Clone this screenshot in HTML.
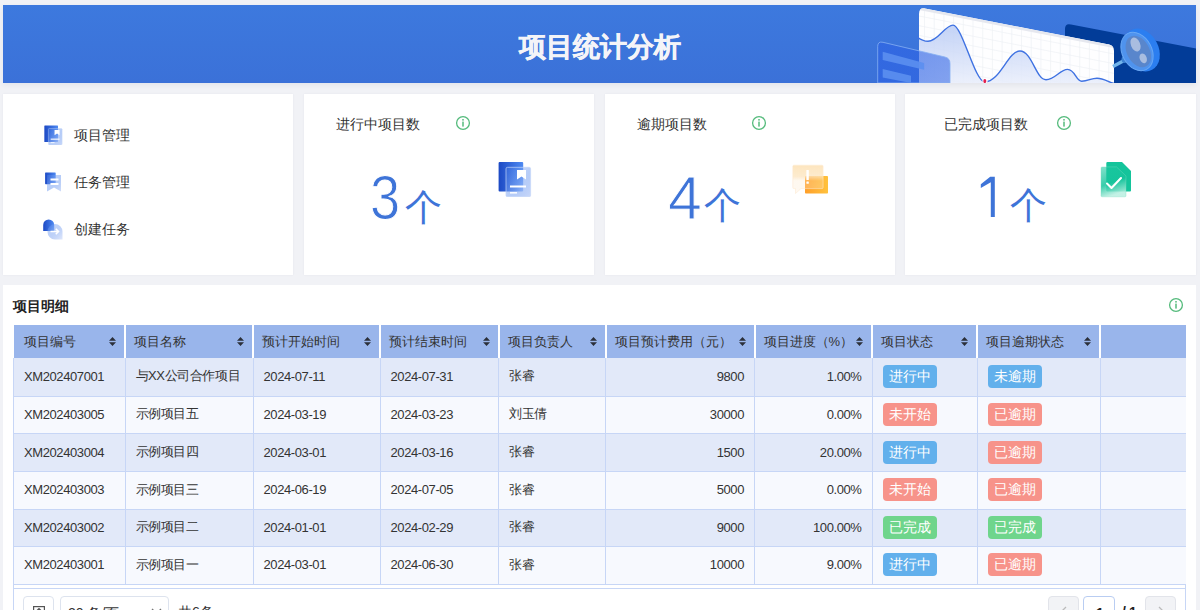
<!DOCTYPE html>
<html><head><meta charset="utf-8">
<style>
*{box-sizing:border-box;margin:0;padding:0}
html,body{width:1200px;height:610px;overflow:hidden;background:#f1f2f6;font-family:"Liberation Sans",sans-serif;color:#333}
.abs{position:absolute}
#hdr{position:absolute;left:3px;top:5px;width:1193px;height:78px;box-shadow:0 2px 5px rgba(40,50,90,0.07);background:linear-gradient(180deg,#3d79de 0%,#3b71d8 100%);overflow:hidden}
#hdr .t{position:absolute;left:0;width:1193px;top:3px;height:78px;line-height:78px;text-align:center;color:#f4f4f8;font-size:27px;font-weight:bold;letter-spacing:0px;-webkit-text-stroke:0.5px #f4f4f8}
.card{position:absolute;top:94px;height:181px;background:#fff;box-shadow:0 0 2px rgba(40,50,90,0.06)}
.nav{position:absolute;font-size:14px;color:#333;line-height:16px}
.ct{position:absolute;font-size:14px;color:#333;line-height:16px}
.info{position:absolute;width:14px;height:14px}
.num{position:absolute;color:#3e74d8;font-size:61px;line-height:60px;transform:scaleX(0.86);transform-origin:0 0;-webkit-text-stroke:1px #fff}
.ge{position:absolute;color:#3e74d8;font-size:37px;line-height:37px;margin-top:1px}
#panel{position:absolute;left:3px;top:285px;width:1193px;height:340px;background:#fff}
table{position:absolute;left:13px;top:325px;border-collapse:collapse;table-layout:fixed;font-size:13px;color:#333}
th{background:#99b5eb;height:33px;font-weight:normal;text-align:left;padding:0 0 0 8px;border-left:2px solid #fff;position:relative;color:#333}
th:first-child{border-left:none;padding-left:10px}
th .s{position:absolute;right:8px;top:12px;width:7px;height:9px}
td{height:37.6px;padding:0 0 1.4px 10px;letter-spacing:-0.4px;border-left:1px solid #c7d6f6;border-bottom:1px solid #c7d6f6;white-space:nowrap}
td:first-child{border-left:1px solid #c7d6f6}
tr.o td{background:#e2e9f9}
tr:nth-child(2) td{height:38.4px}
tr.e td{background:#f7f9fe}
td.r{text-align:right;padding:0 10px 1.4px 0}
.tag{display:inline-block;height:23px;line-height:23px;padding:0 6px;letter-spacing:0;border-radius:4px;color:#fff;font-size:14px}
.b{background:#62b0ec}.rd{background:#f7938a}.g{background:#6fd58c}
#foot{position:absolute;left:0;top:0;width:1200px;height:610px;pointer-events:none}
#foot:before{content:"";box-sizing:border-box;position:absolute;left:13px;top:585px;width:1172.5px;height:40px;border:1px solid #c7d6f6;border-top:none;background:#fff}
#foot:after{content:"";position:absolute;left:13px;top:588px;width:1172.5px;height:1px;background:#c7d6f6}
.pbtn{position:absolute;top:596px;height:30px;border:1px solid #dde3ee;border-radius:4px;background:#fff;font-size:14px;color:#333}
.pbtn.gr{background:#f2f3f6;border-color:#e2e4ea}
</style></head><body>
<div id="hdr">
  <svg class="abs" style="left:0;top:0" width="1193" height="78" viewBox="3 5 1193 78">
<defs>
<clipPath id="wp"><path d="M919 83V14Q919 7.5 925 8.5L1109 44.5Q1114 45.5 1114 51V83Z"/></clipPath>
<linearGradient id="wf" x1="0" y1="0" x2="0" y2="1"><stop offset="0" stop-color="#b9cbf5"/><stop offset="1" stop-color="#e9eefb"/></linearGradient>
<linearGradient id="lp" x1="0" y1="0" x2="1" y2="0"><stop offset="0" stop-color="#2d62e5" stop-opacity="0.62"/><stop offset="1" stop-color="#2d62e5" stop-opacity="0.55"/></linearGradient>
</defs>
<path d="M1065 83V29Q1065 23 1071 24.5L1196 48.5V83Z" fill="#023c98"/>
<path d="M919 83V14Q919 7.5 925 8.5L1109 44.5Q1114 45.5 1114 51V83Z" fill="#fefeff"/>
<g clip-path="url(#wp)">
<path d="M924.5 0V83M934.2 0V83M943.9 0V83M953.6 0V83M963.3 0V83M973.0 0V83M982.7 0V83M992.4 0V83M1002.1 0V83M1011.8 0V83M1021.5 0V83M1031.2 0V83M1040.9 0V83M1050.6 0V83M1060.3 0V83M1070.0 0V83M1079.7 0V83M1089.4 0V83M1099.1 0V83M1108.8 0V83M919 6.3L1114 44.3M919 16.0L1114 54.0M919 25.7L1114 63.7M919 35.4L1114 73.4M919 45.1L1114 83.1M919 54.8L1114 92.8M919 64.5L1114 102.5M919 74.2L1114 112.2M919 83.9L1114 121.9" stroke="#eef0f5" stroke-width="0.7" fill="none"/>
<path d="M917 37C921 40 924 41.3 928 41.3C938 41.3 945 25.1 953 25.1C962 25.1 975 82 984.7 82C1000 82 1008 51 1020 51C1032 51 1036 79.7 1046 79.7C1055 79.7 1060 69.4 1067.6 69.4C1075 69.4 1076 81.2 1081.7 81.2C1088 81.2 1091 78.2 1097 78.2C1104 78.2 1108 82 1114 83.5V84H917Z" fill="url(#wf)" opacity="0.85"/>
<path d="M919 8.5L1114 46.5" stroke="#e6e8ef" stroke-width="3" fill="none"/>
</g>
<path d="M917 37C921 40 924 41.3 928 41.3C938 41.3 945 25.1 953 25.1C962 25.1 975 82 984.7 82C1000 82 1008 51 1020 51C1032 51 1036 79.7 1046 79.7C1055 79.7 1060 69.4 1067.6 69.4C1075 69.4 1076 81.2 1081.7 81.2C1088 81.2 1091 78.2 1097 78.2C1104 78.2 1108 82 1114 83.5" stroke="#3f72e2" stroke-width="1.4" fill="none"/>
<ellipse cx="985" cy="81" rx="2.6" ry="3" fill="#fff"/>
<ellipse cx="984.8" cy="81" rx="1.5" ry="2.1" fill="#e2204f"/>
<path d="M877.7 83V46.3Q877.7 41.1 883 42.3L945 57Q950 58.2 950 63.5V83Z" fill="url(#lp)" stroke="#86b0f3" stroke-width="0.8"/>
<path d="M882.7 51.8L924.1 62.9V69.8L882.7 60Z" fill="#5b8ff0" opacity="0.9"/>
<path d="M882.7 69L911 75.8V83L882.7 77.5Z" fill="#5b8ff0" opacity="0.9"/>
<line x1="1113" y1="66.5" x2="1125" y2="60" stroke="#72b4ea" stroke-width="3.4"/>
<ellipse cx="1124.5" cy="59.5" rx="3" ry="3.4" fill="#3d82d4"/>
<ellipse cx="1141.5" cy="50" rx="17" ry="22.5" transform="rotate(-28 1141.5 50)" fill="#2b7ef0"/>
<ellipse cx="1137" cy="51.5" rx="14.8" ry="20.2" transform="rotate(-28 1137 51.5)" fill="#4f93ee" stroke="#6aa8f4" stroke-width="1"/>
<ellipse cx="1138.3" cy="51.5" rx="11.3" ry="16.8" transform="rotate(-28 1138.3 51.5)" fill="#5986cc"/>
<ellipse cx="1135.5" cy="44.5" rx="4.6" ry="7.4" transform="rotate(-22 1135.5 44.5)" fill="#a9bde0"/>
<ellipse cx="1143.2" cy="58.3" rx="3.5" ry="5" transform="rotate(-22 1143.2 58.3)" fill="#a9bde0"/>
</svg>
  <div class="t">项目统计分析</div>
</div>

<div class="card" style="left:3px;width:290px"></div>
<div class="card" style="left:304px;width:290px"></div>
<div class="card" style="left:605px;width:290px"></div>
<div class="card" style="left:905px;width:291px"></div>

<svg class="abs" style="left:498px;top:161px" width="36" height="36" viewBox="0 0 36 36">
<defs><linearGradient id="dk498" x1="0" y1="0" x2="1" y2="0"><stop offset="0" stop-color="#1c49c4"/><stop offset="1" stop-color="#4e8af2"/></linearGradient>
<linearGradient id="lt498" x1="0" y1="0" x2="1" y2="1"><stop offset="0" stop-color="#5b8ef0" stop-opacity="0.2"/><stop offset="0.55" stop-color="#86abf3" stop-opacity="0.6"/><stop offset="1" stop-color="#c6d6f9" stop-opacity="0.95"/></linearGradient></defs>
<rect x="0.6" y="1" width="24.6" height="29.5" rx="1" fill="url(#dk498)"/>
<rect x="8" y="6.3" width="24.6" height="29.5" rx="1.5" stroke="#c4d5f8" stroke-width="0.7" fill="url(#lt498)"/>
<path d="M19 9H28V18.5L23.5 15.5L19 18.5Z" fill="#fff"/>
<rect x="12" y="24.5" width="16" height="2" fill="#fff"/>
<rect x="12" y="31" width="7" height="1.6" fill="#fff" opacity="0.9"/>
</svg>
<svg class="abs" style="left:43.8px;top:124.5px" width="20" height="20" viewBox="0 0 36 36">
<defs><linearGradient id="dk43.8" x1="0" y1="0" x2="1" y2="0"><stop offset="0" stop-color="#1c49c4"/><stop offset="1" stop-color="#4e8af2"/></linearGradient>
<linearGradient id="lt43.8" x1="0" y1="0" x2="1" y2="1"><stop offset="0" stop-color="#5b8ef0" stop-opacity="0.2"/><stop offset="0.55" stop-color="#86abf3" stop-opacity="0.6"/><stop offset="1" stop-color="#c6d6f9" stop-opacity="0.95"/></linearGradient></defs>
<rect x="0.6" y="1" width="24.6" height="29.5" rx="1" fill="url(#dk43.8)"/>
<rect x="8" y="6.3" width="24.6" height="29.5" rx="1.5" stroke="#c4d5f8" stroke-width="0.7" fill="url(#lt43.8)"/>
<path d="M19 9H28V18.5L23.5 15.5L19 18.5Z" fill="#fff"/>
<rect x="12" y="24.5" width="16" height="2" fill="#fff"/>
<rect x="12" y="31" width="7" height="1.6" fill="#fff" opacity="0.9"/>
</svg>
<svg class="abs" style="left:42px;top:170px" width="22" height="24" viewBox="42 170 22 24">
<defs><linearGradient id="n2d" x1="0" y1="0" x2="1" y2="0"><stop offset="0" stop-color="#1c49c4"/><stop offset="1" stop-color="#4e8af2"/></linearGradient>
<linearGradient id="n2l" x1="0" y1="0" x2="1" y2="1"><stop offset="0" stop-color="#5b8ef0" stop-opacity="0.25"/><stop offset="0.5" stop-color="#86abf3" stop-opacity="0.6"/><stop offset="1" stop-color="#cfdcf8" stop-opacity="0.95"/></linearGradient></defs>
<rect x="45.1" y="172.4" width="10.6" height="11.8" rx="0.6" fill="url(#n2d)"/>
<path d="M47 175H61V191.5L54 187.5L47 191.5Z" fill="url(#n2l)"/>
<rect x="50.5" y="178.5" width="8" height="2" fill="#fff"/>
<rect x="50.5" y="183" width="8" height="2" fill="#fff"/>
</svg>
<svg class="abs" style="left:42px;top:218px" width="22" height="24" viewBox="42 218 22 24">
<defs><linearGradient id="n3d" x1="0" y1="0" x2="1" y2="0"><stop offset="0" stop-color="#1c49c4"/><stop offset="1" stop-color="#4e8af2"/></linearGradient>
<linearGradient id="n3l" x1="0" y1="0" x2="1" y2="1"><stop offset="0" stop-color="#5b8ef0" stop-opacity="0.3"/><stop offset="0.5" stop-color="#9ab8f4" stop-opacity="0.65"/><stop offset="1" stop-color="#dfe7fb" stop-opacity="0.95"/></linearGradient></defs>
<path d="M43.2 231V225A5.5 5.5 0 0 1 54.2 225V231Z" fill="url(#n3d)"/>
<path d="M47.5 231.5A7.5 7.5 0 0 1 62.5 231.5V239.5H55A7.5 7.5 0 0 1 47.5 232Z" fill="url(#n3l)"/>
<path d="M50.5 231.5H58.5M55.8 228.8L58.5 231.5L55.8 234.2" stroke="#fff" stroke-width="1.6" fill="none"/>
</svg>
<svg class="abs" style="left:790px;top:162px" width="40" height="34" viewBox="790 162 40 34">
<defs><linearGradient id="or" x1="0" y1="0" x2="1" y2="0"><stop offset="0" stop-color="#ff9f2a"/><stop offset="1" stop-color="#ffc23d"/></linearGradient>
<linearGradient id="ob" x1="0" y1="0" x2="0" y2="1"><stop offset="0" stop-color="#fde3b8" stop-opacity="1"/><stop offset="0.4" stop-color="#fde6c0" stop-opacity="0.85"/><stop offset="0.55" stop-color="#fde8c8" stop-opacity="0.3"/><stop offset="1" stop-color="#fdebd2" stop-opacity="0.35"/></linearGradient></defs>
<rect x="805" y="175.9" width="23" height="17.6" rx="0.8" fill="url(#or)"/>
<path d="M794 165.2H822Q823.1 165.2 823.1 166.3V187.5Q823.1 188.6 822 188.6H801L795.5 193.5V188.6H794Q792.8 188.6 792.8 187.5V166.3Q792.8 165.2 794 165.2Z" fill="url(#ob)" opacity="0.9" stroke="#fde9cf" stroke-width="0.6"/>
<rect x="806.4" y="170" width="2.4" height="10" rx="0.5" fill="#fff"/>
<rect x="806.4" y="181.6" width="2.4" height="2.2" rx="0.5" fill="#fff"/>
</svg>
<svg class="abs" style="left:1098px;top:160px" width="36" height="38" viewBox="1098 160 36 38">
<defs><linearGradient id="gf" x1="0" y1="0" x2="0.3" y2="1"><stop offset="0" stop-color="#1cc8a0" stop-opacity="0.55"/><stop offset="0.6" stop-color="#16c49c" stop-opacity="0.85"/><stop offset="1" stop-color="#b5eedf" stop-opacity="0.8"/></linearGradient></defs>
<path d="M1107.5 162H1122L1131 171V190.5Q1131 191.5 1130 191.5H1107.5Q1106.3 191.5 1106.3 190.5V163Q1106.3 162 1107.5 162Z" fill="#14c49b"/>
<path d="M1102 166.9H1116.5L1126 176V195.8Q1126 196.8 1125 196.8H1102Q1101 196.8 1101 195.8V168Q1101 166.9 1102 166.9Z" fill="url(#gf)" stroke="#7fdcc2" stroke-opacity="0.6" stroke-width="0.6"/>
<path d="M1107 183.5L1111.5 188L1121 178" stroke="#fff" stroke-width="2.1" fill="none" stroke-linecap="round" stroke-linejoin="round"/>
</svg>
<svg class="abs" style="left:455px;top:115px" width="16" height="16" viewBox="0 0 16 16"><circle cx="8" cy="8" r="6.4" stroke="#55bb7c" stroke-width="1.3" fill="none"/><rect x="7.25" y="4" width="1.5" height="1.6" fill="#55bb7c"/><rect x="7.25" y="6.6" width="1.5" height="5" fill="#55bb7c"/></svg>
<svg class="abs" style="left:751px;top:115px" width="16" height="16" viewBox="0 0 16 16"><circle cx="8" cy="8" r="6.4" stroke="#55bb7c" stroke-width="1.3" fill="none"/><rect x="7.25" y="4" width="1.5" height="1.6" fill="#55bb7c"/><rect x="7.25" y="6.6" width="1.5" height="5" fill="#55bb7c"/></svg>
<svg class="abs" style="left:1056px;top:115px" width="16" height="16" viewBox="0 0 16 16"><circle cx="8" cy="8" r="6.4" stroke="#55bb7c" stroke-width="1.3" fill="none"/><rect x="7.25" y="4" width="1.5" height="1.6" fill="#55bb7c"/><rect x="7.25" y="6.6" width="1.5" height="5" fill="#55bb7c"/></svg>
<div class="nav" style="left:74px;top:127px">项目管理</div>
<div class="nav" style="left:74px;top:174px">任务管理</div>
<div class="nav" style="left:74px;top:221px">创建任务</div>

<div class="ct" style="left:336px;top:116px">进行中项目数</div>
<div class="ct" style="left:637px;top:116px">逾期项目数</div>
<div class="ct" style="left:944px;top:116px">已完成项目数</div>

<div class="num" style="left:370px;top:167px;font-size:63px">3</div><div class="ge" style="left:405px;top:188px">个</div>
<div class="num" style="left:667.5px;top:168px;font-size:62px;transform:scaleX(0.98)">4</div><div class="ge" style="left:703.5px;top:185.5px">个</div>
<svg class="abs" style="left:975px;top:170px" width="25" height="52" viewBox="975 170 25 52"><path d="M990.2 176.8H994.8V217H990.8V182.3L980.8 188V184.3Z" fill="#3e74d8"/></svg><div class="ge" style="left:1009.5px;top:185.5px">个</div>

<div id="panel"></div>
<svg class="abs" style="left:1168px;top:297px" width="16" height="16" viewBox="0 0 16 16"><circle cx="8" cy="8" r="6.4" stroke="#55bb7c" stroke-width="1.3" fill="none"/><rect x="7.25" y="4" width="1.5" height="1.6" fill="#55bb7c"/><rect x="7.25" y="6.6" width="1.5" height="5" fill="#55bb7c"/></svg>
<div class="abs" style="left:13px;top:298px;font-size:14px;font-weight:bold;color:#222;line-height:16px">项目明细</div>

<table>
<colgroup><col style="width:111.5px"><col style="width:128px"><col style="width:127px"><col style="width:118.5px"><col style="width:107px"><col style="width:149px"><col style="width:117.5px"><col style="width:105px"><col style="width:123px"><col style="width:85.5px"></colgroup>
<tr><th>项目编号<svg class="s" viewBox="0 0 7 9"><path d="M0 3.8L3.5 0L7 3.8Z M0 5.2L3.5 9L7 5.2Z" fill="#2b2f3a"/></svg></th><th>项目名称<svg class="s" viewBox="0 0 7 9"><path d="M0 3.8L3.5 0L7 3.8Z M0 5.2L3.5 9L7 5.2Z" fill="#2b2f3a"/></svg></th><th>预计开始时间<svg class="s" viewBox="0 0 7 9"><path d="M0 3.8L3.5 0L7 3.8Z M0 5.2L3.5 9L7 5.2Z" fill="#2b2f3a"/></svg></th><th>预计结束时间<svg class="s" viewBox="0 0 7 9"><path d="M0 3.8L3.5 0L7 3.8Z M0 5.2L3.5 9L7 5.2Z" fill="#2b2f3a"/></svg></th><th>项目负责人<svg class="s" viewBox="0 0 7 9"><path d="M0 3.8L3.5 0L7 3.8Z M0 5.2L3.5 9L7 5.2Z" fill="#2b2f3a"/></svg></th><th>项目预计费用（元）<svg class="s" viewBox="0 0 7 9"><path d="M0 3.8L3.5 0L7 3.8Z M0 5.2L3.5 9L7 5.2Z" fill="#2b2f3a"/></svg></th><th>项目进度（%）<svg class="s" viewBox="0 0 7 9"><path d="M0 3.8L3.5 0L7 3.8Z M0 5.2L3.5 9L7 5.2Z" fill="#2b2f3a"/></svg></th><th>项目状态<svg class="s" viewBox="0 0 7 9"><path d="M0 3.8L3.5 0L7 3.8Z M0 5.2L3.5 9L7 5.2Z" fill="#2b2f3a"/></svg></th><th>项目逾期状态<svg class="s" viewBox="0 0 7 9"><path d="M0 3.8L3.5 0L7 3.8Z M0 5.2L3.5 9L7 5.2Z" fill="#2b2f3a"/></svg></th><th></th></tr>
<tr class="o"><td>XM202407001</td><td>与XX公司合作项目</td><td>2024-07-11</td><td>2024-07-31</td><td>张睿</td><td class="r">9800</td><td class="r">1.00%</td><td><span class="tag b">进行中</span></td><td><span class="tag b">未逾期</span></td><td></td></tr>
<tr class="e"><td>XM202403005</td><td>示例项目五</td><td>2024-03-19</td><td>2024-03-23</td><td>刘玉倩</td><td class="r">30000</td><td class="r">0.00%</td><td><span class="tag rd">未开始</span></td><td><span class="tag rd">已逾期</span></td><td></td></tr>
<tr class="o"><td>XM202403004</td><td>示例项目四</td><td>2024-03-01</td><td>2024-03-16</td><td>张睿</td><td class="r">1500</td><td class="r">20.00%</td><td><span class="tag b">进行中</span></td><td><span class="tag rd">已逾期</span></td><td></td></tr>
<tr class="e"><td>XM202403003</td><td>示例项目三</td><td>2024-06-19</td><td>2024-07-05</td><td>张睿</td><td class="r">5000</td><td class="r">0.00%</td><td><span class="tag rd">未开始</span></td><td><span class="tag rd">已逾期</span></td><td></td></tr>
<tr class="o"><td>XM202403002</td><td>示例项目二</td><td>2024-01-01</td><td>2024-02-29</td><td>张睿</td><td class="r">9000</td><td class="r">100.00%</td><td><span class="tag g">已完成</span></td><td><span class="tag g">已完成</span></td><td></td></tr>
<tr class="e"><td>XM202403001</td><td>示例项目一</td><td>2024-03-01</td><td>2024-06-30</td><td>张睿</td><td class="r">10000</td><td class="r">9.00%</td><td><span class="tag b">进行中</span></td><td><span class="tag rd">已逾期</span></td><td></td></tr>
</table>
<div id="foot">
<div class="pbtn" style="left:23px;width:31px"><svg class="abs" style="left:9px;top:9px" width="12" height="12" viewBox="0 0 12 12"><rect x="0.6" y="0.6" width="10.8" height="10.8" fill="none" stroke="#555" stroke-width="1.2"/><path d="M6 2.5V8M3.5 5L6 2.5L8.5 5M2.5 9.5H9.5" stroke="#555" stroke-width="1.1" fill="none"/></svg></div>
<div class="pbtn" style="left:59.5px;width:109.5px"><span style="position:absolute;left:7.5px;top:8px">20 条/页</span><svg class="abs" style="left:90px;top:11px" width="11" height="7" viewBox="0 0 11 7"><path d="M1 1L5.5 5.5L10 1" stroke="#777" stroke-width="1.3" fill="none"/></svg></div>
<span class="abs" style="left:178px;top:604px;font-size:14px;color:#333">共6条</span>
<div class="pbtn gr" style="left:1048.3px;width:30.7px"><svg class="abs" style="left:11px;top:9px" width="7" height="12" viewBox="0 0 7 12"><path d="M6 1L1 6L6 11" stroke="#bbb" stroke-width="1.3" fill="none"/></svg></div>
<div class="pbtn" style="left:1083px;width:32px;border-color:#b9cdf2"><span style="position:absolute;left:12px;top:8px;font-weight:bold;color:#222">1</span></div>
<span class="abs" style="left:1122px;top:604px;font-size:14px;color:#222;font-weight:bold;letter-spacing:3px">/1</span>
<div class="pbtn gr" style="left:1144.7px;width:31.3px"><svg class="abs" style="left:12px;top:9px" width="7" height="12" viewBox="0 0 7 12"><path d="M1 1L6 6L1 11" stroke="#bbb" stroke-width="1.3" fill="none"/></svg></div>
</div>

</body></html>
